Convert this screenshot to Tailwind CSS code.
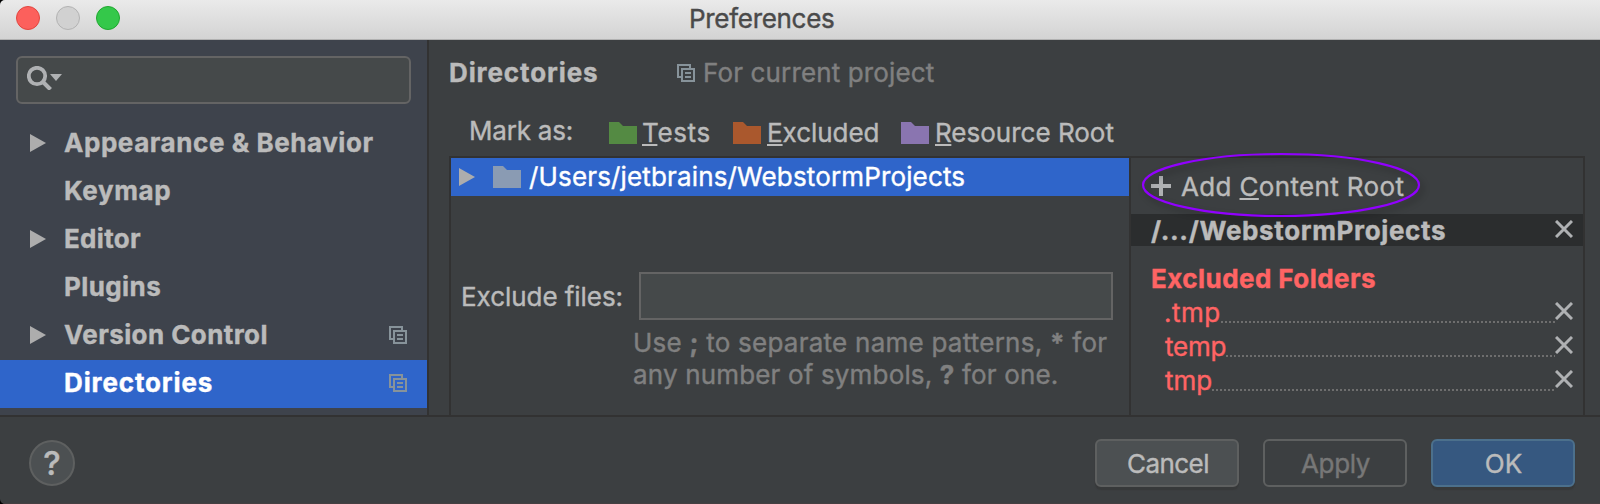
<!DOCTYPE html>
<html lang="en">
<head>
<meta charset="utf-8">
<title>Preferences</title>
<script src="https://cdn.jsdelivr.net/npm/@tailwindcss/browser@4"></script>
</head>
<body class="bg-black">
<svg class="hidden">
  <symbol id="copy" viewBox="0 0 18 18"><path d="M4 13H1V1H13V4M5 5H17V17H5ZM8 9H14M8 13H14" fill="none" stroke="currentColor" stroke-width="2"/></symbol>
  <symbol id="folder" viewBox="0 0 28 22"><path d="M0 0H10L14 4H28V22H0Z" fill="currentColor"/></symbol>
  <symbol id="arrow" viewBox="0 0 16 18"><path d="M0 0L16 9L0 18Z" fill="currentColor"/></symbol>
  <symbol id="cross" viewBox="0 0 18 18"><path d="M1 1L17 17M17 1L1 17" fill="none" stroke="currentColor" stroke-width="3"/></symbol>
</svg>
<div class="flex h-[504px] w-[1600px] flex-col overflow-hidden rounded-l-[5px] bg-[#3c3f41] font-['Inter',sans-serif] text-[26px] text-[#bbbbbb] whitespace-nowrap [-webkit-text-stroke:0.4px_currentColor]">
  <header class="relative flex h-10 shrink-0 items-start border-b border-[#b1b1b1] bg-linear-to-b from-[#eaeaea] to-[#d3d3d3] pl-4 pt-1.5">
    <div class="flex gap-4">
      <span class="size-6 rounded-full border border-[#e2463f] bg-[#fc605c]"></span>
      <span class="size-6 rounded-full border border-[#b3b3b3] bg-[#d1d1d1]"></span>
      <span class="size-6 rounded-full border border-[#1fa82f] bg-[#34c84a]"></span>
    </div>
    <h1 class="ml-[569px] -mt-1.5 leading-[37px] tracking-[-0.3px] text-[#4a4a4a]">Preferences</h1>
  </header>

  <main class="flex h-[375px] shrink-0">
    <aside class="w-[429px] shrink-0 border-r-2 border-[#323232] bg-[#3e434c] pt-4">
      <div class="ml-4 flex h-12 w-[395px] rounded-md border-2 border-[#646464] bg-[#45494a] pl-[9px] pt-2">
        <svg class="h-6 w-9 text-[#afb1b3]" viewBox="0 0 36 24" fill="none"><circle cx="10" cy="10" r="8.2" stroke="currentColor" stroke-width="3.8"/><path d="M15.5 15.5L23.5 23.5" stroke="currentColor" stroke-width="4"/><path d="M23 8H35L29 15Z" fill="currentColor"/></svg>
      </div>
      <nav class="mt-4 font-bold leading-[45px]">
        <div class="flex h-12 pl-[30px]"><svg class="mt-[14px] h-[18px] w-4 text-[#adadad]"><use href="#arrow"/></svg><span class="ml-[18px] tracking-[0.56px]">Appearance &amp; Behavior</span></div>
        <div class="flex h-12 pl-16"><span class="tracking-[0.6px]">Keymap</span></div>
        <div class="flex h-12 pl-[30px]"><svg class="mt-[14px] h-[18px] w-4 text-[#adadad]"><use href="#arrow"/></svg><span class="ml-[18px] tracking-[0.3px]">Editor</span></div>
        <div class="flex h-12 pl-16"><span class="tracking-[0.4px]">Plugins</span></div>
        <div class="flex h-12 pl-[30px]"><svg class="mt-[14px] h-[18px] w-4 text-[#adadad]"><use href="#arrow"/></svg><span class="ml-[18px] tracking-[0.42px]">Version Control</span><svg class="ml-auto mr-5 mt-[14px] size-[18px] text-[#87939a]"><use href="#copy"/></svg></div>
        <div class="flex h-12 bg-[#2f65ca] pl-16 text-white"><span class="tracking-[0.87px]">Directories</span><svg class="ml-auto mr-5 mt-[14px] size-[18px] text-[#87939a]"><use href="#copy"/></svg></div>
      </nav>
    </aside>

    <section class="flex flex-col pl-5">
      <div class="flex h-[66px] items-center">
        <h2 class="w-[228px] font-bold leading-[66px] tracking-[0.9px]">Directories</h2>
        <svg class="size-[18px] text-[#87939a]"><use href="#copy"/></svg>
        <span class="ml-2 leading-[66px] tracking-[0.14px] text-[#808080]">For current project</span>
      </div>
      <div class="flex h-[50px] pl-5 leading-[50px]">
        <span class="w-[140px] tracking-[-0.2px]">Mark as:</span>
        <svg class="mt-4 h-[22px] w-7 text-[#548a43]"><use href="#folder"/></svg>
        <span class="ml-[5px] mt-0.5 w-[91px] tracking-[0.65px]"><u class="decoration-2 underline-offset-[2px] [text-decoration-skip-ink:none]">T</u>ests</span>
        <svg class="mt-4 h-[22px] w-7 text-[#aa582d]"><use href="#folder"/></svg>
        <span class="ml-1.5 mt-0.5 w-[134px] tracking-[-0.05px]"><u class="decoration-2 underline-offset-[2px] [text-decoration-skip-ink:none]">E</u>xcluded</span>
        <svg class="mt-4 h-[22px] w-7 text-[#8a75b0]"><use href="#folder"/></svg>
        <span class="ml-[6px] mt-0.5"><u class="decoration-2 underline-offset-[2px] [text-decoration-skip-ink:none]">R</u>esource Root</span>
      </div>
      <div class="flex h-[259px] w-[1136px] border-x-2 border-t-2 border-[#323232]">
        <div class="w-[680px] border-r-2 border-[#323232]">
          <div class="flex h-[38px] bg-[#2f65ca] pl-2 leading-[38px] text-white">
            <svg class="mt-[10px] h-[18px] w-4 text-[#adadad]"><use href="#arrow"/></svg>
            <svg class="ml-[18px] mt-2 h-[22px] w-7 text-[#8a9bb3]"><use href="#folder"/></svg>
            <span class="ml-2 tracking-[0.15px]">/Users/jetbrains/WebstormProjects</span>
          </div>
          <div class="mt-[76px] flex h-12 pl-2.5">
            <span class="w-[178px] leading-[49px] tracking-[-0.05px]">Exclude files:</span>
            <div class="h-12 w-[474px] border-2 border-[#646464] bg-[#45494a]"></div>
          </div>
          <p class="ml-[182px] mt-[7px] leading-8 text-[#808080]"><span class="tracking-[0.24px]">Use <b>;</b> to separate name patterns, <b>*</b> for</span><br><span class="tracking-[0.16px]">any number of symbols, <b>?</b> for one.</span></p>
        </div>
        <div class="relative flex-1">
          <svg class="absolute left-0 -top-2 h-[80px] w-[310px] overflow-visible drop-shadow-[3px_4px_3px_rgba(0,0,0,0.3)]" fill="none"><ellipse cx="150" cy="35" rx="138" ry="31" stroke="#9100ff" stroke-width="2.2"/></svg>
          <div class="flex h-14 pl-5">
            <svg class="mt-[18px] size-5 text-[#afb1b3]" viewBox="0 0 20 20"><path d="M10 0V20M0 10H20" stroke="currentColor" stroke-width="4"/></svg>
            <span class="ml-2.5 leading-[57px] tracking-[0.35px]">Add <u class="decoration-2 underline-offset-[2px] [text-decoration-skip-ink:none]">C</u>ontent Root</span>
          </div>
          <div class="flex h-8 items-start bg-[#2b2d2e] pl-5">
            <span class="font-bold leading-[33px] tracking-[0.64px]">/.../WebstormProjects</span>
            <svg class="ml-auto mr-[10px] mt-1.5 size-[18px] text-[#afb1b3]"><use href="#cross"/></svg>
          </div>
          <div class="mt-4 pl-5 font-bold leading-[34px] tracking-[0.45px] text-[#ff6464]">Excluded Folders</div>
          <div class="flex h-[34px] pl-[33px]"><span class="leading-[34px] tracking-[0.5px] text-[#ff6464]">.tmp</span><i class="mt-[25px] h-0.5 flex-1 bg-[repeating-linear-gradient(90deg,#6e6e6e_0_2px,transparent_2px_4px)]"></i><svg class="mr-[10px] mt-1.5 size-[18px] text-[#afb1b3]"><use href="#cross"/></svg></div>
          <div class="flex h-[34px] pl-[34px]"><span class="leading-[34px] tracking-[-0.2px] text-[#ff6464]">temp</span><i class="mt-[25px] h-0.5 flex-1 bg-[repeating-linear-gradient(90deg,#6e6e6e_0_2px,transparent_2px_4px)]"></i><svg class="mr-[10px] mt-1.5 size-[18px] text-[#afb1b3]"><use href="#cross"/></svg></div>
          <div class="flex h-[34px] pl-[34px]"><span class="leading-[34px] text-[#ff6464]">tmp</span><i class="mt-[25px] h-0.5 flex-1 bg-[repeating-linear-gradient(90deg,#6e6e6e_0_2px,transparent_2px_4px)]"></i><svg class="mr-[10px] mt-1.5 size-[18px] text-[#afb1b3]"><use href="#cross"/></svg></div>
        </div>
      </div>
    </section>
  </main>

  <footer class="flex h-[89px] shrink-0 items-start gap-6 border-t-2 border-b border-t-[#323232] border-b-[#453f41] pl-[29px] pr-[25px] pt-[22px]">
    <button class="mr-auto mt-px size-[46px] rounded-full border-2 border-[#5e6060] bg-[#4c5052] text-[33px] font-medium leading-[43px]">?</button>
    <button class="h-12 w-36 rounded-md border-2 border-[#5e6060] bg-[#4c5052] pl-0.5 leading-[46px] tracking-[-0.55px] shadow-[0_3px_1px_#37393a]">Cancel</button>
    <button class="h-12 w-36 rounded-md border-2 border-[#5e6060] pl-px leading-[46px] tracking-[-0.4px] text-[#777777]">Apply</button>
    <button class="h-12 w-36 rounded-md border-2 border-[#4c708c] bg-[#365880] pl-px leading-[46px] shadow-[0_3px_1px_#37393a]">OK</button>
  </footer>
</div>
</body>
</html>
